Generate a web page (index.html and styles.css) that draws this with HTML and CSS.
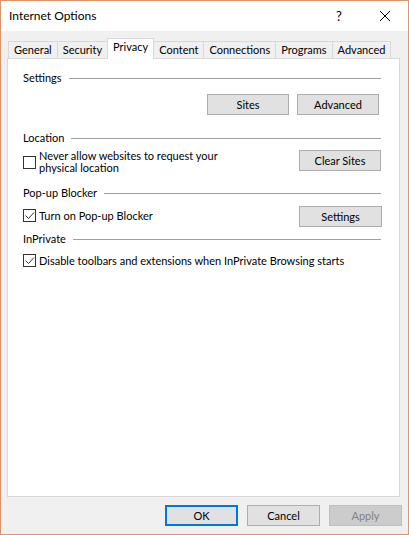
FILE: index.html
```html
<!DOCTYPE html>
<html>
  <head>
    <meta charset="UTF-8" />
    <title>Internet Options</title>
    <link rel="stylesheet" href="styles.css">
  </head>
  <body>
    <div class="window">
      <div class="titlebar">
        <span class="title">Internet Options</span>
        <span class="caption-btn help">?</span>
        <span class="caption-btn">
          <svg width="10" height="10" viewBox="0 0 10 10">
            <path d="M0 0L10 10M10 0L0 10" stroke="#000" stroke-width="1" fill="none" />
          </svg>
        </span>
      </div>

      <div class="tabs">
        <div class="tab">General</div>
        <div class="tab">Security</div>
        <div class="tab active">Privacy</div>
        <div class="tab">Content</div>
        <div class="tab">Connections</div>
        <div class="tab">Programs</div>
        <div class="tab">Advanced</div>
      </div>

      <div class="panel">
        <div class="group-title">Settings</div>
        <div class="btn-row mt-9">
          <button>Sites</button>
          <button>Advanced</button>
        </div>

        <div class="group-title mt-16">Location</div>
        <div class="option-row mt-5">
          <label class="check">
            <span class="box"></span>
            <span class="check-text">Never allow websites to request your<br />physical location</span>
          </label>
          <button>Clear Sites</button>
        </div>

        <div class="group-title mt-12">Pop-up Blocker</div>
        <div class="option-row mt-6">
          <label class="check mt-3">
            <span class="box">
              <svg width="11" height="11" viewBox="0 0 11 11">
                <path d="M1.5 5.5L4.5 8.5L10 2.5" stroke="#333" stroke-width="1" fill="none" />
              </svg>
            </span>
            <span class="check-text">Turn on Pop-up Blocker</span>
          </label>
          <button class="wide">Settings</button>
        </div>

        <div class="group-title mt-5">InPrivate</div>
        <div class="option-row mt-8">
          <label class="check">
            <span class="box">
              <svg width="11" height="11" viewBox="0 0 11 11">
                <path d="M1.5 5.5L4.5 8.5L10 2.5" stroke="#333" stroke-width="1" fill="none" />
              </svg>
            </span>
            <span class="check-text">Disable toolbars and extensions when InPrivate Browsing starts</span>
          </label>
        </div>
      </div>

      <div class="footer">
        <button class="default">OK</button>
        <button>Cancel</button>
        <button class="disabled">Apply</button>
      </div>
    </div>
  </body>
</html>
```

FILE: styles.css
```css
:root {
  --frame: #d9946b;
  --face: #f0f0f0;
  --edge: #d9d9d9;
  --rule: #a0a0a0;
  --btn-bg: #e1e1e1;
  --btn-border: #adadad;
  --focus: #0078d7;
  --disabled-bg: #cccccc;
  --disabled-border: #bfbfbf;
  --disabled-text: #838383;
  --text-color: #000000;
  --box-color: #333333;
}

body {
  margin: 0;
  padding: 0;
  background: #ffffff;
  font-family: Lato, "Liberation Sans", sans-serif;
  font-size: 11px;
  color: var(--text-color);
}

.window {
  width: 409px;
  height: 535px;
  box-sizing: border-box;
  border: 1px solid var(--frame);
  background: var(--face);
  display: flex;
  flex-direction: column;
}

.titlebar {
  flex: none;
  height: 30px;
  background: #ffffff;
  display: flex;
  align-items: center;
}

.title {
  flex: 1;
  padding-left: 8px;
  font-size: 12px;
  line-height: 30px;
}

.caption-btn {
  width: 46px;
  height: 30px;
  display: flex;
  align-items: center;
  justify-content: center;
}

.help {
  font-size: 13px;
}

.tabs {
  flex: none;
  height: 20px;
  margin: 7px 0 0 7px;
  display: flex;
  align-items: flex-end;
}

.tab {
  height: 17px;
  box-sizing: border-box;
  padding: 0 5px;
  border: 1px solid var(--edge);
  border-bottom: none;
  line-height: 16px;
}

.tab + .tab {
  margin-left: -1px;
}

.tab.active {
  height: 21px;
  margin-bottom: -1px;
  background: #ffffff;
  position: relative;
  z-index: 1;
}

.panel {
  flex: 1;
  margin: 0 8px 0 6px;
  padding: 12px 18px 0 15px;
  background: #ffffff;
  border: 1px solid var(--edge);
}

.group-title {
  display: flex;
  align-items: center;
  line-height: 14px;
}

.group-title::after {
  content: '';
  flex: 1;
  height: 1px;
  margin-left: 7px;
  background: var(--rule);
}

.btn-row {
  display: flex;
  justify-content: flex-end;
  gap: 8px;
  margin-right: 2px;
}

.option-row {
  display: flex;
  align-items: flex-start;
  justify-content: space-between;
}

.check {
  display: flex;
  align-items: center;
  gap: 3px;
}

.box {
  flex: none;
  width: 13px;
  height: 13px;
  box-sizing: border-box;
  border: 1px solid var(--box-color);
  background: #ffffff;
  display: flex;
}

.check-text {
  line-height: 12px;
}

button {
  all: unset;
  box-sizing: border-box;
  width: 82px;
  height: 21px;
  border: 1px solid var(--btn-border);
  background: var(--btn-bg);
  text-align: center;
  line-height: 19px;
  font-size: 11px;
}

button.wide {
  width: 83px;
  margin-right: -1px;
}

.footer {
  flex: none;
  display: flex;
  justify-content: flex-end;
  gap: 9px;
  padding: 8px 6px 8px 0;
}

.footer button {
  width: 73px;
}

.footer .default {
  border: 2px solid var(--focus);
  line-height: 17px;
}

.footer .disabled {
  background: var(--disabled-bg);
  border-color: var(--disabled-border);
  color: var(--disabled-text);
}

.mt-3 {
  margin-top: 3px;
}
.mt-5 {
  margin-top: 5px;
}
.mt-6 {
  margin-top: 6px;
}
.mt-8 {
  margin-top: 8px;
}
.mt-9 {
  margin-top: 9px;
}
.mt-12 {
  margin-top: 12px;
}
.mt-16 {
  margin-top: 16px;
}
```
